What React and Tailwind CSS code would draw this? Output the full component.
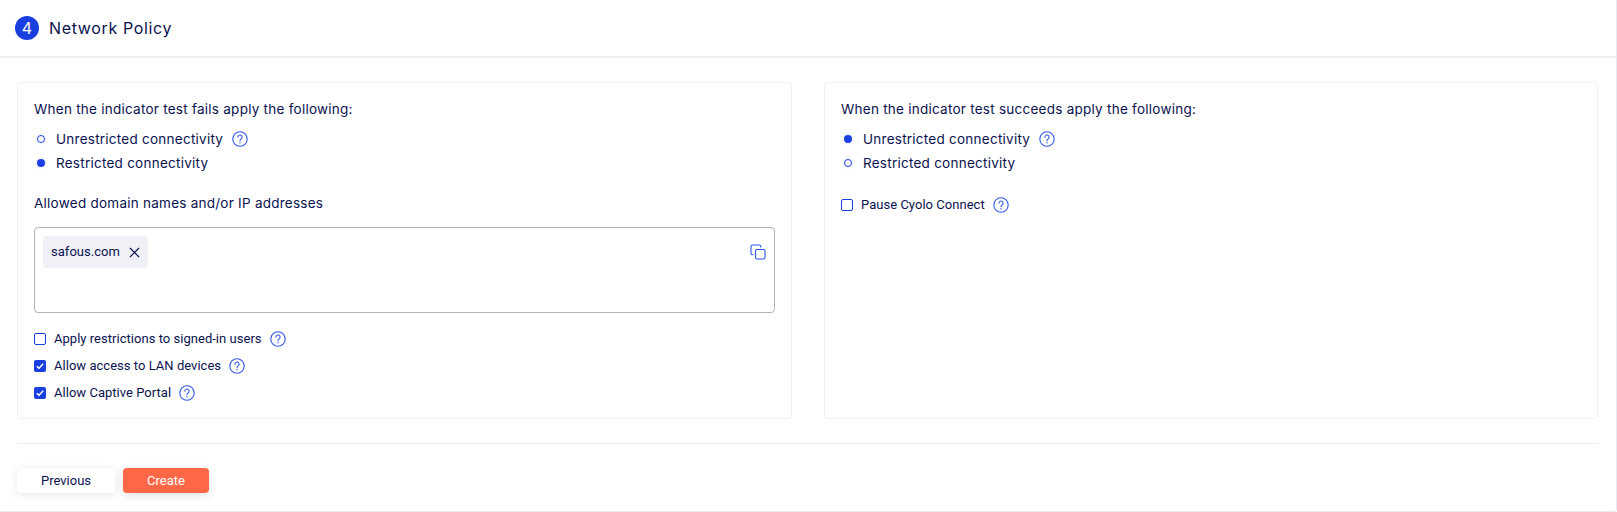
import { X } from "lucide-react";

const heading = "font-['Inter',sans-serif] text-[13.5px] font-normal tracking-[0.25px] text-[#0a1250]";
const roboto = "font-['Roboto',sans-serif] text-[13px] tracking-[0.03px] text-[#0a1250]";

function HelpIcon() {
  return (
    <svg width="16" height="16" viewBox="0 0 16 16" fill="none" className="shrink-0">
      <circle cx="8" cy="8" r="7.2" stroke="#3258ea" strokeWidth="1.1" />
      <path d="M5.9 6.2a2.1 2.1 0 1 1 3.3 1.7c-.7.5-1.2.9-1.2 1.8" stroke="#3258ea" strokeWidth="1.1" strokeLinecap="round" />
      <circle cx="8" cy="11.8" r="0.7" fill="#3258ea" />
    </svg>
  );
}

function Radio({ checked, label, help }) {
  return (
    <div className="flex h-6 items-center">
      <span className="flex h-[13px] w-[13px] items-center justify-center">
        {checked ? (
          <span className="h-2 w-2 rounded-full bg-[#1a3fe0] shadow-[0_0_0_2px_#f4f5fb]" />
        ) : (
          <span className="h-2 w-2 rounded-full border border-[#1a3fe0] shadow-[0_0_0_2px_#f4f5fb]" />
        )}
      </span>
      <span className={`ml-[9px] ${heading}`}>{label}</span>
      {help && (
        <span className="ml-[9px]">
          <HelpIcon />
        </span>
      )}
    </div>
  );
}

function Check({ checked, label }) {
  return (
    <div className="flex h-[27px] items-center">
      {checked ? (
        <span className="flex h-3 w-3 items-center justify-center rounded-[2px] bg-[#1a3fe0]">
          <svg width="10" height="10" viewBox="0 0 10 10" fill="none">
            <path d="M1.8 5.2 4 7.3 8.2 2.8" stroke="#fff" strokeWidth="1.5" />
          </svg>
        </span>
      ) : (
        <span className="h-3 w-3 rounded-[2px] border border-[#1a3fe0]" />
      )}
      <span className={`ml-2 ${roboto}`}>{label}</span>
      <span className="ml-2">
        <HelpIcon />
      </span>
    </div>
  );
}

export default function App() {
  return (
    <div className="h-[512px] w-[1617px] bg-white">
      <div className="h-[512px] w-[1617px] rounded-br border-r border-b border-[#e6e8f2]">
        {/* header */}
        <div className="flex h-[58px] items-center border-b-2 border-[#eef0f5] pl-[15px]">
          <span className="flex h-6 w-6 items-center justify-center rounded-full bg-[#1a3fe0] font-['Inter',sans-serif] text-[16px] font-normal text-white">
            4
          </span>
          <span className="ml-[10px] font-['Inter',sans-serif] text-[16px] font-normal tracking-[0.65px] text-[#0a1250]">
            Network Policy
          </span>
        </div>

        <div className="pr-[18px] pl-[17px] pt-6">
          <div className="flex gap-8">
            {/* failing test */}
            <div className="h-[337px] w-[775px] rounded border border-[#eef0f7] px-4 pt-[16px]">
              <div className={`${heading} h-[20px] leading-[20px]`}>When the indicator test fails apply the following:</div>
              <div className="mt-2">
                <Radio label="Unrestricted connectivity" help />
                <Radio checked label="Restricted connectivity" />
              </div>
              <div className={`${heading} mt-[18px] h-[20px] leading-[20px]`}>Allowed domain names and/or IP addresses</div>
              <div className="relative mt-[14px] h-[86px] rounded border border-[#b4b4b8] p-2">
                <div className="flex h-8 w-[105px] items-center rounded bg-[#eff1f6] pl-2">
                  <span className={roboto}>safous.com</span>
                  <X size={17} strokeWidth={1.6} className="ml-[6px] text-[#0a1250]" />
                </div>
                <svg width="16" height="16" viewBox="0 0 16 16" fill="none" className="absolute top-[16px] right-[8px]">
                  <rect x="5.5" y="5.5" width="9.5" height="9.5" rx="1.5" stroke="#2f55e8" strokeWidth="1.1" />
                  <path d="M3.5 10.8H2.5A1.5 1.5 0 0 1 1 9.3V2.5A1.5 1.5 0 0 1 2.5 1h6.8a1.5 1.5 0 0 1 1.5 1.5v1" stroke="#2f55e8" strokeWidth="1.1" />
                </svg>
              </div>
              <div className="mt-[12px]">
                <Check label="Apply restrictions to signed-in users" />
                <Check checked label="Allow access to LAN devices" />
                <Check checked label="Allow Captive Portal" />
              </div>
            </div>

            {/* passing test */}
            <div className="h-[337px] w-[774px] rounded border border-[#eef0f7] px-4 pt-[16px]">
              <div className={`${heading} h-[20px] leading-[20px]`}>When the indicator test succeeds apply the following:</div>
              <div className="mt-2">
                <Radio checked label="Unrestricted connectivity" help />
                <Radio label="Restricted connectivity" />
              </div>
              <div className="mt-4">
                <Check label="Pause Cyolo Connect" />
              </div>
            </div>
          </div>

          <div className="mt-[24px] border-t border-[#eef0f5]" />

          {/* actions */}
          <div className="mt-6 flex gap-2">
            <button className="h-[25px] w-[98px] rounded bg-white font-['Roboto',sans-serif] text-[13px] text-[#0a1250] shadow-[0_2px_8px_rgba(20,30,80,0.1)]">
              Previous
            </button>
            <button className="h-[25px] w-[86px] rounded bg-[#ff6846] font-['Roboto',sans-serif] text-[13px] text-white shadow-[0_2px_8px_rgba(20,30,80,0.15)]">
              Create
            </button>
          </div>
        </div>
      </div>
    </div>
  );
}
